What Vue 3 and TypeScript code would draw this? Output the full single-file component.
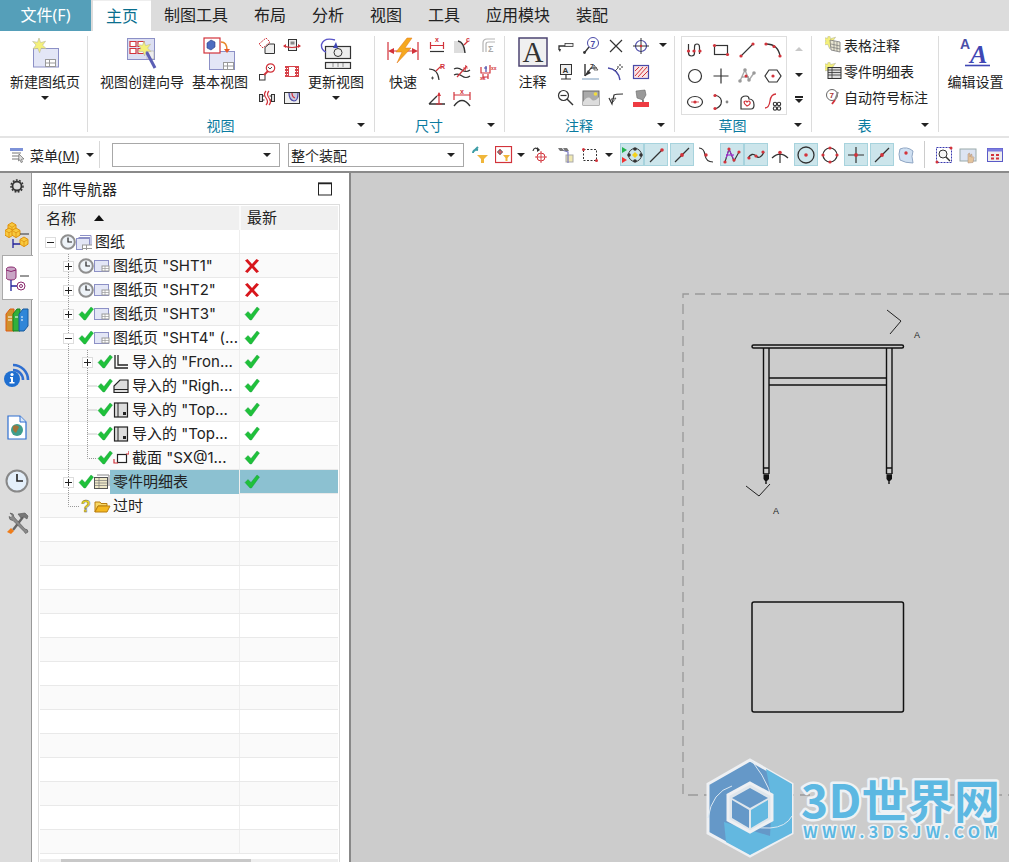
<script setup lang="ts">
import { h, type FunctionalComponent } from 'vue'

// 图标都按 1:1 像素坐标画，w/h 默认 18
interface IconDef { w?: number; h?: number; d: string }

const R = '#d2333b'
const K = '#333'
const B = '#4a4aa8'
const dot = (x: number, y: number, r = 1.6, c = R) => `<circle cx="${x}" cy="${y}" r="${r}" fill="${c}"/>`
const line = (d: string, c = K, w = 1.2) => `<path d="${d}" fill="none" stroke="${c}" stroke-width="${w}"/>`
const tiny = (x: number, y: number, s: string, c = R, fs = 7) =>
  `<text x="${x}" y="${y}" font-size="${fs}" font-weight="700" font-family="Liberation Sans, sans-serif" fill="${c}">${s}</text>`
const star = (x: number, y: number) =>
  `<path d="M${x} ${y - 7}l1.6 4.6 5-1.4-3 4 3.6 3.4-5-.4-1.6 4.6-1.8-4.4-4.8.6 3-4-3.4-3.6 4.9.9z" fill="#f4f07a" stroke="#b9b9a0" stroke-width=".6"/>`
const miniTable = (x: number, y: number) =>
  `<rect x="${x}" y="${y}" width="10" height="7" fill="#fff" stroke="#999"/><path d="M${x} ${y + 3.5}h10M${x + 4} ${y}v7" stroke="#999"/>`
const sheet = (x: number, y: number, w: number, h2: number) =>
  `<rect x="${x}" y="${y}" width="${w}" height="${h2}" fill="#e3e6f6" stroke="#8c90c6"/>`
const cube = (x: number, y: number, s: number) =>
  `<path d="M${x} ${y + s * .3}l${s * .5}-${s * .3} ${s * .5} ${s * .3}v${s * .6}l-${s * .5} ${s * .3}-${s * .5}-${s * .3}z" fill="#f7c93e" stroke="#e0920f"/><path d="M${x} ${y + s * .3}l${s * .5} ${s * .3} ${s * .5}-${s * .3}M${x + s * .5} ${y + s * .6}v${s * .6}" fill="none" stroke="#e0920f" stroke-width=".8"/>`
const check = '<path d="M1 8.500l3-3 3 3L13 1l2.500 2-8 11H6z" fill="#1fc13a" stroke="#12983a" stroke-width=".4"/>'
const cross = '<path d="M1 2.500L3.500 1 8 6l4.500-5L15 2.500 10 8l5 5.500-2.500 1.500L8 10l-4.500 5L1 13.500 6 8z" fill="#d8161c"/>'

const icons: Record<string, IconDef> = {
  // 大图标
  newSheet: { w: 30, h: 32, d: sheet(3.5, 11.5, 25, 18.5) + miniTable(15.5, 22.5) + star(9, 8) },
  wizard: {
    w: 32, h: 34,
    d: `<rect x="1.500" y="1.500" width="27" height="21" fill="#dcdff2" stroke="#8c90c6"/>` +
      `<path d="M4 4.500h6v5H4zM12 4.500h6v5h-6zM4 11.500h6v5H4zM12 11.500h6v5h-6z" fill="#fff" stroke="${R}" stroke-width="1.200"/>` +
      `<path d="M21 14h7v8h-7z" fill="#eee" stroke="#aaa" stroke-width=".6"/>` +
      `<path d="M19 12l10 19" stroke="#5b5fb5" stroke-width="3"/>` + star(18, 11),
  },
  baseView: {
    w: 34, h: 34,
    d: sheet(6.5, 14.5, 25, 18) + miniTable(20.5, 25.5) +
      `<rect x="1" y="1" width="16" height="15" fill="#fff" stroke="${R}" stroke-width="1.200"/>` +
      `<path d="M4 6l4-3 4 2v5l-4 3-4-2z" fill="#4d6cc0" stroke="#2c3a80" stroke-width=".6"/>` +
      `<path d="M18 5q6 0 6 8" fill="none" stroke="#e8882c" stroke-width="1.600"/><path d="M21 12h6l-3 4z" fill="#e8582c"/>`,
  },
  updateView: {
    w: 32, h: 32,
    d: `<rect x="5.500" y="9.500" width="25" height="12" fill="#eee" stroke="${K}" stroke-width="1.200"/>` +
      `<rect x="5.500" y="25.500" width="25" height="6" fill="#eee" stroke="${K}" stroke-width="1.200"/>` +
      `<path d="M13 26.500v4M18 26.500v4M23 26.500v4" stroke="${K}" stroke-dasharray="1 1"/>` +
      `<circle cx="18" cy="15.500" r="4" fill="none" stroke="${K}"/>` +
      `<path d="M15 3Q4 0 1.500 7.500 1 13 6 15" fill="none" stroke="#5a55c8" stroke-width="1.400"/><path d="M13 11l3-6 2 6z" fill="#3f47b4"/>`,
  },
  bolt: {
    w: 32, h: 28,
    d: `<path d="M1 5v18M31 5v18M3 14h26" stroke="${R}" stroke-width="1.200"/><path d="M1 14l6-3v6zM31 14l-6-3v6z" fill="${R}"/>` +
      `<path d="M20 1L9 15h6l-5 11 14-15h-6l7-10z" fill="#f5a81f" stroke="#e0741a" stroke-width=".5"/>`,
  },
  bigA: {
    w: 30, h: 30,
    d: `<rect x="1" y="1" width="28" height="28" fill="#f0f0f0" stroke="#4c4472" stroke-width="1.500"/>` +
      `<text x="15" y="25" text-anchor="middle" font-size="29" font-family="Liberation Serif, serif" fill="#333">A</text>`,
  },
  editSet: {
    w: 34, h: 32,
    d: `<text x="1" y="12" font-size="14" font-weight="700" font-family="Liberation Sans, sans-serif" fill="#4a4fa8">A</text>` +
      `<text x="11" y="26" font-size="26" font-weight="700" font-style="italic" font-family="Liberation Serif, serif" fill="#3f47b4">A</text>` +
      `<path d="M6 28.500h25" stroke="#3f47b4" stroke-width="1.600"/>`,
  },
  // 视图组小图标
  v1: { d: `<path d="M1 7l7-6 4 4-7 6z" fill="none" stroke="${R}" stroke-dasharray="2 1"/><path d="M7 16.500v-6l4-3.500h5.500v9.500z" fill="#eee" stroke="${K}"/>` },
  v2: { d: `<rect x="5.500" y="2.500" width="8" height="11" fill="#eee" stroke="${K}"/><rect x="7.500" y="4.500" width="4" height="3" fill="#888"/>` + line('M1 9q8 3 16 0', R) + `<path d="M0 9l3-2v4zM18 9l-3-2v4z" fill="${R}"/>` },
  v3: { d: `<circle cx="12.500" cy="5" r="4.200" fill="#fff" stroke="${R}" stroke-width="1.200"/><rect x="1.500" y="11.500" width="5.500" height="5.500" fill="#fff" stroke="${K}"/>` + line('M6 12l4-4', R, 1.800) + line('M10 4l2 2 2-2', K, .9) },
  v4: { d: `<rect x="2" y="3" width="14" height="11" fill="#d6434a"/><rect x="6" y="4" width="6" height="9" fill="#fff"/><path d="M2 5.500h14M2 8.500h14M2 11.500h14" stroke="#fff" stroke-dasharray="1 1"/>` },
  v5: { d: `<rect x="1.500" y="5.500" width="3" height="7" fill="#ddd" stroke="${K}"/><rect x="13.500" y="5.500" width="3" height="7" fill="#ddd" stroke="${K}"/><path d="M4.500 7h2M4.500 11h2M11.500 7h2M11.500 11h2" stroke="${K}"/>` + line('M8 2q-3 3 0 7t0 7M11 2q-3 3 0 7t0 7', R) },
  v6: { d: `<rect x="1.500" y="3.500" width="15" height="11" fill="#eee" stroke="${K}"/><path d="M6 4q0 7 5 8 4 0 4-8z" fill="#c9c9dd"/>` + line('M6 4q0 7 5 8 4 0 4-8', B) + line('M9 4q0 4 3 5', R) },
  // 尺寸组
  d1: { d: line('M2.500 5v7M15.500 5v7M2.500 8.500h13', R) + tiny(7, 5, 'x') + line('M2 14.500h14', K) },
  d2: { d: `<path d="M1 4h5q4 2 5 12H1z" fill="#ddd"/>` + line('M5 4q6 1 7 12', K, 1.400) + line('M11 8l4-4', R) + tiny(13, 5, 'c') },
  d3: { d: line('M4 15V6q0-4 4-4h8M7 15V7q0-2 3-2h6', '#b5b5b5', 1.200) + tiny(9, 15, 'Σ', '#aaa', 9) },
  d4: { d: line('M1 6q9 0 10 11', K) + line('M8 8l4-4h3', R) + tiny(12, 5.5, 'R') + `<path d="M3 15h3M4.500 13.500v3" stroke="${K}" stroke-width=".8"/>` },
  d5: { d: line('M1 6q4-2 8 1t8 0M1 12q4-2 8 1t8 0', K) + line('M4 14L14 3', R) + `<path d="M10 5h5M12.500 2v6" stroke="${R}" stroke-width=".7"/>` },
  d6: { d: line('M2 4v6h9V2M4 14h5M4 11v5M9 11v5', R) + line('M5 5h3M7 3v6', B) + tiny(12, 7, 'xx', R, 5) + tiny(1, 17, 'xx', R, 5) },
  d7: { d: line('M1 15L9 7M1 15h16', K, 1.300) + line('M11 4v11M8 15h6', R) + `<path d="M11 3l-2 4h4z" fill="${R}"/>` },
  d8: { d: line('M1 3v8M17 3v8M1 6h16', R) + tiny(7, 5, 'x') + line('M1 17q8-11 16 0', K, 1.300) },
  // 注释组
  n1: { d: line('M2 12V9h6', K, 1.300) + `<rect x="8" y="6.500" width="8" height="3" fill="#eee" stroke="${K}" stroke-width=".8"/>` + `<path d="M1 12l2 3 1-3z" fill="${K}"/>` },
  n2: { d: `<circle cx="11" cy="6" r="5.500" fill="#fff" stroke="${B}"/>` + tiny(8.5, 9.5, '7', B, 8.5) + line('M7 10l-4 5', K, 1.300) + dot(2.5, 15.5, 1.4, K) },
  n3: { d: line('M3 3l12 12M15 3L3 15', K, 1.200) },
  n4: { d: `<circle cx="9" cy="9" r="5.500" fill="none" stroke="${B}" stroke-width="1.200"/>` + line('M9 1v16M1 9h16', K, 1) + dot(9, 9, 1.2) },
  n5: { d: `<rect x="3.500" y="1.500" width="11" height="10" fill="#eee" stroke="${K}"/>` + tiny(5.5, 9.5, 'A', K, 8) + line('M9 11.500v4M4 16h10', K, 1.200) },
  n6: { d: line('M3 1v12', K, 1.400) + line('M3 13L9 5h6', K) + `<path d="M3 13l3-6 3 3z" fill="${K}"/>` + `<rect x="0" y="15" width="17" height="2" fill="#bcd"/>` + tiny(8, 6, '7', K, 7) + `<path d="M12 2l4 5h-4z" fill="none" stroke="${K}" stroke-width=".7"/>` },
  n7: { d: line('M1 5q10 1 12 12', B, 1.400) + line('M11 5l-3 3', K, .8) + `<path d="M13 1v2M13 5v2M10 4h2M14 4h2" stroke="${K}"/>` },
  n8: { d: `<rect x="1.500" y="2.500" width="15" height="13" fill="#fbe3e3" stroke="${B}" stroke-width="1.200"/><path d="M3 13l8-9M6 14l9-10M10 14l6-6M3 8l4-4" stroke="${R}"/>` },
  n9: { d: `<circle cx="6.500" cy="6.500" r="5" fill="none" stroke="${K}" stroke-width="1.200"/>` + line('M3.500 6.500h6', K) + line('M10 10l6 6', K, 1.400) },
  n10: { d: `<rect x="1" y="2" width="16" height="14" fill="#aaa" stroke="#666"/><path d="M1 13q5-7 8-3t8-2v8H1z" fill="#ddd"/>` + dot(13.5, 5, 1.8, '#f1dc3c') },
  n11: { d: line('M2 9l3 6 2-9q1-1 9-1', K, 1.200) + `<path d="M4 10l5-1-3 4z" fill="none" stroke="${K}" stroke-width=".7"/>` },
  n12: { w: 18, h: 20, d: `<rect x="1" y="14" width="16" height="5" fill="#ee3b42"/><path d="M4 3l9-1 1 5-3 5-6-2z" fill="#999" stroke="#666" stroke-width=".6"/>` + line('M11 12v2', K) },
  // 草图库
  s1: { d: line('M2.500 3v9q0 3 3 3t3-3V6q0-3 2.500-3t2.500 3v7', K, 1.200) + dot(2.5, 10) + dot(8, 10) + dot(14, 10) },
  s2: { d: `<rect x="2.500" y="4.500" width="13" height="9" fill="none" stroke="${K}" stroke-width="1.200"/>` + dot(2.5, 4.5) + dot(15.5, 13.5) },
  s3: { d: line('M3 15L15 3', K, 1.100) + dot(3, 15) + dot(15, 3) },
  s4: { d: line('M2 3q12 0 14 12', K, 1.300) + dot(2, 3) + dot(10, 5.5) + dot(16, 15) },
  s5: { d: `<circle cx="9" cy="9" r="6.500" fill="none" stroke="${K}" stroke-width="1.200"/>` },
  s6: { d: line('M9 1.500v15M1.500 9h15', K, 1.200) },
  s7: { d: line('M2 14L7 3l4 10 5-7', '#aaa', 1.400) + line('M4 10h7', '#888', 1) + dot(2, 14, 1.8, '#999') + dot(7, 3, 1.8, '#999') + dot(11, 13, 1.8, '#999') + dot(16, 6, 1.8, '#999') + dot(8, 9, 1.5) },
  s8: { d: `<path d="M5 3h8l4 6-4 6H5L1 9z" fill="none" stroke="${K}" stroke-width="1.200"/>` + dot(9, 9) },
  s9: { d: `<ellipse cx="9" cy="9" rx="7.500" ry="5.500" fill="none" stroke="${K}" stroke-width="1.200"/>` + line('M5 9h8', R, .8) + dot(9, 9) },
  s10: { d: line('M3 2q8 2 6 9-1 3-6 5', K, 1.200) + dot(3, 2.5) + dot(3, 15.5) + dot(15, 9, 1.4, '#888') },
  s11: { d: `<path d="M3 7q0-4 5-4 3 0 3 3 5 0 5 6 0 4-3 4H3z" fill="#fff" stroke="${K}" stroke-width="1.200"/><path d="M6 9q2-2 3 0 2-2 3 0t-3 4q-3-2-3-4z" fill="#fff" stroke="${R}" stroke-width="1.200"/>` },
  s12: { d: line('M1 15q4 0 5-7t6-7', R, 1.300) + `<g fill="none" stroke="${K}" stroke-width="1.100"><circle cx="11" cy="11" r="1.700"/><circle cx="15" cy="11" r="1.700"/><circle cx="11" cy="15.500" r="1.700"/><circle cx="15" cy="15.500" r="1.700"/></g>` },
  // 表
  t1: { d: star(4, 5) + `<path d="M5 4l10 2v10L6 14z" fill="#e9e6d2" stroke="#777" stroke-width=".8"/><path d="M6 8l9 2M6 11l9 2M9 5v10M12 6v9" stroke="#777" stroke-width=".7"/>` },
  t2: { d: star(4, 5) + `<rect x="3" y="5.500" width="13" height="11" fill="#dedede" stroke="${K}"/><path d="M3 8h13M3 10.500h13M3 13h13M7 5.500v11" stroke="${K}" stroke-width=".8"/>` },
  t3: { d: `<circle cx="7" cy="7" r="5.500" fill="#fff" stroke="#666"/>` + tiny(4.5, 10, '7', '#a33', 8) + line('M10 12l-3 4', R, 1.800) + line('M13 4l-3 8', '#888', 1.800) },
  // 工具条
  menu: { d: `<rect x="1" y="2" width="13" height="3" fill="#7d92d8"/><path d="M3 7h9M3 10h7M3 13h7" stroke="#777"/><path d="M10 8l5 5-2.500.2 1 2.800-1.500.5-1-2.800-1.500 1.300z" fill="#ddd" stroke="#555" stroke-width=".6"/>` },
  tbFilter: { d: `<path d="M6 9h11l-4 4v4h-3v-4z" fill="#f0b63a"/>` + line('M2 7q0-4 5-3M7 1L3 5', '#3d9da6', 2) },
  tbRedBox: { d: `<rect x=".500" y=".500" width="16" height="16" fill="none" stroke="${R}" stroke-width="1.200"/>` + line('M5 3v6M2 6h6', R) + `<circle cx="5" cy="6" r="2" fill="none" stroke="${K}" stroke-width=".7"/><path d="M8 9h7l-2.500 3v3h-2v-3z" fill="#f0b63a"/>` },
  tb3: { d: `<circle cx="10" cy="11" r="4" fill="none" stroke="${R}"/>` + line('M10 5v12M4 11h12', R, .9) + line('M8 4Q3 0 2 5', K, 1.200) + `<path d="M6 1l3 3-3 2z" fill="#333"/>` },
  tb4: { d: `<rect x="9" y="9" width="7" height="7" fill="#f0e8b0" stroke="#aaa"/>` + line('M2 3l9 3v11', '#7a7ac0', 1.200) + `<path d="M1 2h4l2 3H3zM6 2h4l2 3H8z" fill="#777"/>` },
  tb5: { d: `<rect x="2.500" y="3.500" width="13" height="11" fill="none" stroke="${K}" stroke-dasharray="2 1.500"/>` + dot(2.5, 3.5, 1.5) + dot(15.5, 14.5, 1.5) },
  snapAll: { w: 22, h: 20, d: `<path d="M1 2l5 3-5 3z" fill="#22b14c"/><path d="M1 12l5 3-5 3z" fill="#e33"/><circle cx="14" cy="10" r="6.500" fill="none" stroke="${K}"/>` + dot(14, 4, 1.8, K) + dot(14, 16, 1.8, K) + dot(8, 10, 1.8, K) + dot(20, 10, 1.8, K) + `<path d="M14 7l3 3-3 3-3-3z" fill="#f3d21c"/>` },
  ln1: { d: line('M3 16L15 4', K, 1.200) + dot(15, 4, 1.8) },
  ln2: { d: line('M2 16L16 2', K, 1.200) + dot(9, 9, 1.9) },
  ln3: { d: line('M2 2q5 0 6 7t8 7', K, 1.200) + dot(9, 9, 1.7) },
  ln4: { d: line('M2 16L6 3l5 12 5-9', K, 1.100) + line('M3 9h8', '#a02ccf', 1.200) + line('M3 12L6 3l5 11', '#a02ccf', 1) + dot(6, 3) + dot(11, 14) + dot(2, 16) + dot(16, 6) },
  ln5: { d: line('M1 12q4-6 8-2t8-4', K, 1.300) + dot(2, 12) + dot(9, 10) + dot(16, 6) },
  ln6: { d: line('M1 12q8-8 16 0M9 6v11', K, 1.200) + dot(9, 6.5, 1.8) },
  cir1: { w: 20, h: 20, d: `<circle cx="10" cy="10" r="8" fill="none" stroke="${K}" stroke-width="1.300"/>` + dot(10, 10, 1.8) },
  cir2: { d: `<circle cx="9" cy="9" r="7" fill="none" stroke="${K}" stroke-width="1.200"/>` + dot(9, 2) + dot(9, 16) + dot(2, 9) + dot(16, 9) },
  cross: { d: line('M9 1v16M1 9h16', K, 1.200) + dot(9, 9, 1.9) },
  face: { d: `<path d="M3 3q7-3 13 2-2 5 0 12-8 0-13-3-2-6 0-11z" fill="#cfe0f2" stroke="#8fa6c4"/>` + dot(9, 7, 1.7) },
  b1: { d: `<rect x="1.500" y="1.500" width="15" height="15" fill="none" stroke="#3a3ab0" stroke-dasharray="2 1"/><circle cx="8" cy="8" r="4" fill="#f6f6f6" stroke="${K}"/>` + line('M11 11l4 4', K, 1.500) + dot(16, 2, 1.5) + dot(2, 16, 1.5) },
  b2: { d: `<rect x="1" y="3" width="16" height="12" fill="#dde4f2" stroke="#9aa"/><path d="M9 17V8l1.500-1 .5 4 1-3 1 .5v3l1-1 1 1-1 5z" fill="#e4c49c" stroke="#a87" stroke-width=".5"/>` },
  b3: { d: `<rect x="1.500" y="2.500" width="15" height="13" fill="#eee" stroke="#5a5ac8"/><rect x="1.500" y="2.500" width="15" height="3" fill="#7d7de0"/><path d="M5 8h3v2H5zM10 8h3v2h-3zM5 11.500h3v2H5zM10 11.500h3v2h-3z" fill="${R}"/>` },
  // 导航栏
  gear: { d: `<circle cx="9" cy="9" r="4.500" fill="none" stroke="#333" stroke-width="1.800"/><circle cx="9" cy="9" r="6" fill="none" stroke="#333" stroke-width="1.500" stroke-dasharray="1.800 1.500"/>` },
  rTree: { w: 24, h: 26, d: cube(3, .5, 8) + cube(0, 6, 8) + cube(7, 6, 8) + cube(15, 15, 8) + `<path d="M15 12h9" stroke="${K}"/><path d="M8 17v9M8 22h7" stroke="#22229a" stroke-width="1.300" fill="none"/>` },
  rPart: { w: 24, h: 26, d: `<path d="M0 5q0-3 5-3t5 3v7q0 3-5 3t-5-3z" fill="#c9a5c5" stroke="#8b2a6f"/><path d="M0 5q5 3 10 0" fill="none" stroke="#8b2a6f"/><path d="M14 11h9" stroke="${K}"/><path d="M5 15v11M5 21h6" stroke="#22229a" stroke-width="1.300" fill="none"/><circle cx="15" cy="21" r="4" fill="none" stroke="#8b2a6f"/><circle cx="15" cy="21" r="1.500" fill="none" stroke="#8b2a6f"/>` },
  rBooks: { w: 24, h: 24, d: `<path d="M1 6l4-5h4v22H1z" fill="#d0902c" stroke="#e05a10"/><path d="M8 6l4-5h3v22H8z" fill="#30b03c" stroke="#18801f"/><path d="M14 6l4-5h5v17l-4 5h-5z" fill="#2f86d8" stroke="#185a9c"/><path d="M3 9h4M3 12h4M10 9h3M16 9h2M16 12h2" stroke="#fff"/>` },
  rInfo: { w: 26, h: 26, d: `<path d="M9 3a15 15 0 0 1 15 15M9 8a10 10 0 0 1 10 10" fill="none" stroke="#2f6fd0" stroke-width="2.600"/><circle cx="8" cy="17" r="8" fill="#1f6fd0"/><circle cx="8" cy="12.500" r="1.600" fill="#fff"/><path d="M6 15h3v5h1.500v1.500h-5V20H7v-3.500H6z" fill="#fff"/>` },
  rFile: { w: 20, h: 26, d: `<path d="M1 1h12l6 6v17H1z" fill="#fff" stroke="#2f6fd0" stroke-width="1.200"/><path d="M13 1v6h6" fill="#d8e6f8" stroke="#2f6fd0"/><circle cx="10" cy="15" r="6" fill="#3f9e8c"/><path d="M6 11q4-2 6 1l-3 6q-4-2-3-7z" fill="#a3743a"/>` },
  rClock: { w: 24, h: 24, d: `<circle cx="12" cy="12" r="10.500" fill="#e4effa" stroke="#888" stroke-width="2"/><path d="M12 5v7h6" fill="none" stroke="#222" stroke-width="1.600"/>` },
  rTools: { w: 24, h: 24, d: `<path d="M8 19L18 6" stroke="#666" stroke-width="2.400"/><path d="M13 3l7-1 3 3-1 3-3-2-3 1z" fill="#777" stroke="#555" stroke-width=".6"/><path d="M5 2q4 0 4 4l11 12q3 0 3 3l-2.500 1.500-1.500-2-11-11q-4 0-4-4l2 1 1.500-1.500z" fill="#8a8a8a" stroke="#555" stroke-width=".6"/><path d="M2 21l4-4 3 3-3 3z" fill="#ef7d1a"/>` },
  max: { w: 14, h: 14, d: `<rect x=".500" y="1" width="13" height="12" fill="#fff" stroke="#222"/><path d="M0 1.500h14" stroke="#222" stroke-width="1.500"/>` },
  // 树节点
  plus: { w: 11, h: 11, d: `<rect x=".500" y=".500" width="10" height="10" fill="#fff" stroke="#ddd"/><path d="M2 5.500h7M5.500 2v7" stroke="#222"/>` },
  minus: { w: 11, h: 11, d: `<rect x=".500" y=".500" width="10" height="10" fill="#fff" stroke="#ddd"/><path d="M2 5.500h7" stroke="#222"/>` },
  clock: { w: 16, h: 16, d: `<circle cx="8" cy="8" r="6.800" fill="#eef3f8" stroke="#8f8f8f" stroke-width="2"/><path d="M8 3.500V8h4" fill="none" stroke="#222" stroke-width="1.200"/>` },
  check: { w: 16, h: 16, d: check },
  cross2: { w: 16, h: 16, d: cross },
  quest: { w: 16, h: 16, d: `<text x="8" y="14" text-anchor="middle" font-size="16" font-weight="700" font-family="Liberation Sans, sans-serif" fill="#e8d31c" stroke="#555" stroke-width=".4">?</text>` },
  drawing: { w: 16, h: 16, d: `<path d="M4 1.500h11v10" fill="none" stroke="#8c90c6"/><path d="M2.500 3.500H14" fill="none" stroke="#8c90c6"/><rect x=".500" y="4.500" width="13" height="11" fill="#e3e6f6" stroke="#8c90c6"/>` + miniTable(6.5, 11) },
  page: { w: 16, h: 14, d: `<rect x=".500" y="1.500" width="14" height="11" fill="#e3e6f6" stroke="#8c90c6"/><rect x="8" y="7" width="7" height="5" fill="#fff" stroke="#999"/><path d="M8 9.500h7M11 7v5" stroke="#999" stroke-width=".7"/>` },
  vFront: { w: 16, h: 16, d: `<path d="M2 1v13h13M5 1v10h10" fill="none" stroke="#222" stroke-width="1.300"/>` },
  vRight: { w: 16, h: 16, d: `<path d="M1 14.500V8l6-6h8v12.500z" fill="#ddd" stroke="#222" stroke-width="1.200"/><path d="M1 11.500h14" stroke="#222"/>` },
  vTop: { w: 16, h: 16, d: `<rect x="1.500" y="1" width="13" height="14" fill="#ddd" stroke="#222" stroke-width="1.200"/><path d="M5 1v14" stroke="#222"/><rect x="10" y="10" width="3" height="3" fill="#222"/>` },
  vSect: { w: 16, h: 16, d: `<rect x="4.500" y="4.500" width="9" height="8" fill="#fff" stroke="#222" stroke-width="1.200"/><path d="M1 9v4h4M13 4h3V1" fill="none" stroke="${R}" stroke-width="1.200"/>` },
  parts: { w: 16, h: 16, d: `<path d="M3 1h12v11" fill="none" stroke="#888"/><rect x=".500" y="3.500" width="13" height="11" fill="#eee8c8" stroke="#555"/><path d="M1 6.500h12M1 9h12M1 11.500h12M5 4v10" stroke="#777" stroke-width=".7"/>` },
  folder: { w: 17, h: 14, d: `<path d="M1 3h5l1 1.500h6V7H4L1 13z" fill="#f7d765" stroke="#b97e10"/><path d="M4 7h12l-3 6H1z" fill="#f4b81f" stroke="#b97e10"/>` },
}

const Ico: FunctionalComponent<{ name: string }> = (p) => {
  const i = icons[p.name]
  const w = i.w ?? 18
  const ht = i.h ?? 18
  return h('svg', { width: w, height: ht, viewBox: `0 0 ${w} ${ht}`, innerHTML: i.d, class: 'ico' })
}
Ico.props = ['name']

const tabs = ['制图工具', '布局', '分析', '视图', '工具', '应用模块', '装配']
const viewTools = ['v1', 'v2', 'v3', 'v4', 'v5', 'v6']
const dimTools = ['d1', 'd2', 'd3', 'd4', 'd5', 'd6', 'd7', 'd8']
const noteTools = ['n1', 'n2', 'n3', 'n4', 'n5', 'n6', 'n7', 'n8', 'n9', 'n10', 'n11', 'n12']
const sketchTools = ['s1', 's2', 's3', 's4', 's5', 's6', 's7', 's8', 's9', 's10', 's11', 's12']
const tableTools = [
  { icon: 't1', label: '表格注释' },
  { icon: 't2', label: '零件明细表' },
  { icon: 't3', label: '自动符号标注' },
]

interface BarItem { n?: string; on?: boolean; ml?: number; caret?: number; sep?: boolean }
const barItems: BarItem[] = [
  { n: 'tbFilter', ml: 4 }, { n: 'tbRedBox' }, { caret: 10 },
  { n: 'tb3', ml: 2 }, { n: 'tb4', ml: 2 }, { n: 'tb5' }, { caret: 14 },
  { n: 'snapAll', on: true, ml: 4 }, { n: 'ln1', on: true },
  { n: 'ln2', on: true, ml: 2 }, { n: 'ln3' },
  { n: 'ln4', on: true, ml: 2 }, { n: 'ln5', on: true }, { n: 'ln6' },
  { n: 'cir1', on: true, ml: 2 }, { n: 'cir2' },
  { n: 'cross', on: true, ml: 2 }, { n: 'ln2', on: true, ml: 2 }, { n: 'face' },
  { sep: true, ml: 6 },
  { n: 'b1', ml: 7 }, { n: 'b2' }, { n: 'b3', ml: 3 },
]

const railItems = [
  { n: 'gear', h: 26, mt: 0 },
  { n: 'rTree', h: 40, mt: 16 },
  { n: 'rPart', h: 45, mt: 0, active: true },
  { n: 'rBooks', h: 40, mt: 0 },
  { n: 'rInfo', h: 40, mt: 15 },
  { n: 'rFile', h: 40, mt: 13 },
  { n: 'rClock', h: 40, mt: 13 },
  { n: 'rTools', h: 40, mt: 2 },
]

interface TreeRow { level: number; exp?: 'plus' | 'minus'; st: string; icon: string; label: string; latest?: string; sel?: boolean }
const indent = [5, 23, 42]
const treeRows: TreeRow[] = [
  { level: 0, exp: 'minus', st: 'clock', icon: 'drawing', label: '图纸' },
  { level: 1, exp: 'plus', st: 'clock', icon: 'page', label: '图纸页 "SHT1"', latest: 'cross2' },
  { level: 1, exp: 'plus', st: 'clock', icon: 'page', label: '图纸页 "SHT2"', latest: 'cross2' },
  { level: 1, exp: 'plus', st: 'check', icon: 'page', label: '图纸页 "SHT3"', latest: 'check' },
  { level: 1, exp: 'minus', st: 'check', icon: 'page', label: '图纸页 "SHT4" (...', latest: 'check' },
  { level: 2, exp: 'plus', st: 'check', icon: 'vFront', label: '导入的 "Fron...', latest: 'check' },
  { level: 2, st: 'check', icon: 'vRight', label: '导入的 "Righ...', latest: 'check' },
  { level: 2, st: 'check', icon: 'vTop', label: '导入的 "Top...', latest: 'check' },
  { level: 2, st: 'check', icon: 'vTop', label: '导入的 "Top...', latest: 'check' },
  { level: 2, st: 'check', icon: 'vSect', label: '截面 "SX@1...', latest: 'check' },
  { level: 1, exp: 'plus', st: 'check', icon: 'parts', label: '零件明细表', latest: 'check', sel: true },
  { level: 1, st: 'quest', icon: 'folder', label: '过时' },
]
const emptyRows = 14
</script>

<template>
  <div class="app">
    <nav class="tabs">
      <div class="file-tab">文件(F)</div>
      <div class="tab active">主页</div>
      <div v-for="t in tabs" :key="t" class="tab">{{ t }}</div>
    </nav>

    <section class="ribbon">
      <div class="grp g1">
        <div class="grp-body">
          <div class="big w-full">
            <div class="big-ico"><Ico name="newSheet" /></div>
            <span>新建图纸页</span>
            <i class="caret big-caret"></i>
          </div>
        </div>
      </div>

      <div class="grp g2">
        <div class="grp-body">
          <div class="big w84">
            <div class="big-ico"><Ico name="wizard" /></div>
            <span>视图创建向导</span>
          </div>
          <div class="big w56 ml8">
            <div class="big-ico"><Ico name="baseView" /></div>
            <span>基本视图</span>
          </div>
          <div class="mini-grid cols2 ml6">
            <div v-for="n in viewTools" :key="n" class="cell"><Ico :name="n" /></div>
          </div>
          <div class="big w56 ml4">
            <div class="big-ico"><Ico name="updateView" /></div>
            <span>更新视图</span>
            <i class="caret big-caret"></i>
          </div>
        </div>
        <div class="grp-foot"><span>视图</span><b><i class="caret"></i></b></div>
      </div>

      <div class="grp g3">
        <div class="grp-body">
          <div class="big w48">
            <div class="big-ico"><Ico name="bolt" /></div>
            <span>快速</span>
          </div>
          <div class="mini-grid cols3">
            <div v-for="n in dimTools" :key="n" class="cell"><Ico :name="n" /></div>
          </div>
        </div>
        <div class="grp-foot"><span>尺寸</span><b><i class="caret"></i></b></div>
      </div>

      <div class="grp g4">
        <div class="grp-body">
          <div class="big w43">
            <div class="big-ico"><Ico name="bigA" /></div>
            <span>注释</span>
          </div>
          <div class="mini-grid cols4">
            <div v-for="n in noteTools" :key="n" class="cell"><Ico :name="n" /></div>
          </div>
          <i class="caret note-caret"></i>
        </div>
        <div class="grp-foot"><span>注释</span><b><i class="caret"></i></b></div>
      </div>

      <div class="grp g5">
        <div class="grp-body">
          <div class="gallery">
            <div v-for="n in sketchTools" :key="n" class="cell"><Ico :name="n" /></div>
          </div>
          <div class="spin">
            <i class="caret up"></i>
            <i class="caret"></i>
            <i class="caret more"></i>
          </div>
        </div>
        <div class="grp-foot"><span>草图</span><b><i class="caret"></i></b></div>
      </div>

      <div class="grp g6">
        <div class="grp-body table-tools">
          <div v-for="t in tableTools" :key="t.icon" class="tool-row">
            <Ico :name="t.icon" />
            <span>{{ t.label }}</span>
          </div>
        </div>
        <div class="grp-foot"><span>表</span><b><i class="caret"></i></b></div>
      </div>

      <div class="grp g7">
        <div class="grp-body">
          <div class="big w-full">
            <div class="big-ico"><Ico name="editSet" /></div>
            <span>编辑设置</span>
          </div>
        </div>
      </div>
    </section>

    <section class="toolbar">
      <Ico name="menu" />
      <span class="menu-label">菜单(<u>M</u>)</span>
      <i class="caret menu-caret"></i>
      <div class="bar-sep"></div>
      <div class="select s-a"><span></span><i class="caret"></i></div>
      <div class="select s-b"><span>整个装配</span><i class="caret"></i></div>
      <template v-for="(b, i) in barItems" :key="i">
        <div v-if="b.sep" class="bar-sep thin" :style="{ marginLeft: b.ml + 'px' }"></div>
        <div v-else-if="b.caret" class="bar-caret" :style="{ width: b.caret + 'px' }"><i class="caret"></i></div>
        <div v-else class="bar-btn" :class="{ on: b.on }" :style="{ marginLeft: (b.ml ?? 0) + 'px' }">
          <Ico :name="b.n!" />
        </div>
      </template>
    </section>

    <main class="main">
      <aside class="rail">
        <div
          v-for="r in railItems"
          :key="r.n"
          class="rail-item"
          :class="{ active: r.active }"
          :style="{ height: r.h + 'px', marginTop: r.mt + 'px' }"
        >
          <Ico :name="r.n" />
        </div>
      </aside>

      <section class="panel">
        <header class="panel-head">
          <span>部件导航器</span>
          <Ico name="max" />
        </header>
        <div class="grid">
          <div class="grid-head">
            <div class="col-name">名称<i class="sort"></i></div>
            <div class="col-new">最新</div>
          </div>
          <div class="grid-rows">
            <div v-for="(r, i) in treeRows" :key="i" class="row" :class="{ alt: i % 2 === 1, sel: r.sel }">
              <div class="cell-name" :style="{ paddingLeft: indent[r.level] + 'px' }">
                <span class="exp"><Ico v-if="r.exp" :name="r.exp" /></span>
                <span class="st"><Ico :name="r.st" /></span>
                <span class="node"><Ico :name="r.icon" /></span>
                <span class="label">{{ r.label }}</span>
              </div>
              <div class="cell-new"><Ico v-if="r.latest" :name="r.latest" /></div>
            </div>
            <div v-for="n in emptyRows" :key="'e' + n" class="row" :class="{ alt: (n + 11) % 2 === 1 }">
              <div class="cell-name"></div>
              <div class="cell-new"></div>
            </div>
            <svg class="guides" width="100" height="290" viewBox="0 0 100 290">
              <path
                d="M28.500 24V276.500H40M28.500 36H34M28.500 60H34M28.500 84H34M28.500 108H34M28.500 252H34M47.500 120V228.500H57M47.500 132H53M47.500 156H57M47.500 180H57M47.500 204H57"
                fill="none" stroke="#999" stroke-dasharray="1 1"
              />
            </svg>
          </div>
          <div class="hscroll"><div class="thumb"></div></div>
        </div>
      </section>

      <section class="canvas">
        <svg class="sheet" width="658" height="689" viewBox="351 173 658 689">
          <path d="M1009 294H683V795H1009" fill="none" stroke="#999" stroke-width="1.300" stroke-dasharray="10 6" />
          <g fill="none" stroke="#111" stroke-width="1.400">
            <rect x="752" y="345" width="151.500" height="3" rx="1.500" stroke-width="1.500" />
            <path d="M763.500 348V474M769 348V474M886.500 348V474M892 348V474" />
            <path d="M769 378H886.500M769 385H886.500" />
            <path d="M763.500 468H769M763.500 474H769M886.500 468H892M886.500 474H892" />
            <path d="M766 480V484M889 480V484" />
          </g>
          <path d="M763.500 475H769V479L767 481H765L763.500 479ZM886.500 475H892V479L890 481H888L886.500 479Z" fill="#111" />
          <path d="M887 310L901 321L890 334M746 486L759 496L770 484" fill="none" stroke="#222" />
          <text x="914" y="338" class="sect">A</text>
          <text x="773" y="514" class="sect">A</text>
          <rect x="752" y="602" width="151.500" height="110" rx="2" fill="none" stroke="#111" stroke-width="1.500" />

          <!-- 水印 -->
          <g>
            <path d="M750 760L792 784V833L750 856L708 833V784Z" fill="#6598c8" stroke="#eef0f3" stroke-width="3" />
            <path d="M766 769L792 784V833L750 855L726 842L724 822L770 836L772 800Z" fill="#63b8e0" />
            <path d="M752 761Q775 790 772 812M792 816Q780 838 728 820M708 818Q712 792 732 786" fill="none" stroke="#dbe8f2" />
            <path d="M750 783L772 795V820L750 832L728 820V795Z" fill="#dfe6ec" stroke="#eef0f3" stroke-width="3" />
            <path d="M750 788L768 798L750 808L732 798Z" fill="#6598c8" />
            <path d="M732 800L749 810V828L732 818Z" fill="#6598c8" />
            <path d="M768 800L751 810V828L768 818Z" fill="#63b8e0" />
            <text x="801" y="818" textLength="199" class="wm-big">3D世界网</text>
            <text x="803" y="838" textLength="195" class="wm-small">WWW.3DSJW.COM</text>
          </g>
        </svg>
      </section>
    </main>
  </div>
</template>

<style>
html,
body {
  margin: 0;
  overflow: hidden;
}
</style>

<style scoped>
.app {
  width: 1009px;
  height: 862px;
  display: flex;
  flex-direction: column;
  overflow: hidden;
  background: #fff;
  color: #222;
  font-family: "Noto Sans", "Noto Sans CJK SC", sans-serif;
}

.ico {
  display: block;
  flex: none;
}

.caret {
  display: block;
  width: 0;
  height: 0;
  border-left: 4px solid transparent;
  border-right: 4px solid transparent;
  border-top: 4px solid #222;
}

/* 顶部选项卡 */
.tabs {
  height: 31px;
  flex: none;
  display: flex;
  background: #dcdcdc;
  font-size: 16px;
  line-height: 31px;
}

.file-tab {
  width: 91px;
  margin-right: 2px;
  text-align: center;
  background: #559fb9;
  color: #fff;
}

.tab {
  padding: 0 13px;
}

.tab.active {
  background: #fff;
  color: #0a6f8e;
  border-top: 1px solid #eee;
  line-height: 30px;
}

/* 功能区 */
.ribbon {
  height: 105px;
  flex: none;
  display: flex;
  border-bottom: 2px solid #e4e4e4;
  box-sizing: content-box;
  font-size: 14px;
}

.grp {
  height: 96px;
  margin-top: 5px;
  box-sizing: border-box;
  display: flex;
  flex-direction: column;
  border-right: 1px solid #dcdcdc;
}

.g1 { width: 88px; }
.g2 { width: 287px; }
.g3 { width: 130px; }
.g4 { width: 170px; }
.g5 { width: 137px; }
.g6 { width: 127px; }
.g7 { width: 70px; border-right: 0; }

.g1 .grp-body,
.g7 .grp-body { padding-left: 3px; }
.g2 .grp-body { padding-left: 12px; }
.g3 .grp-body { padding-left: 4px; }
.g4 .grp-body { padding-left: 5px; }
.g4 .big { padding-left: 2px; box-sizing: border-box; }

.grp-body {
  flex: 1;
  min-height: 0;
  display: flex;
  box-sizing: border-box;
}

.grp-foot {
  height: 16px;
  flex: none;
  display: flex;
  line-height: 20px;
}

.grp-foot span {
  flex: 1;
  text-align: center;
  color: #0a7ba0;
}

.grp-foot b {
  width: 21px;
  padding: 7px 0 0 4px;
  box-sizing: border-box;
}

.big {
  display: flex;
  flex-direction: column;
  align-items: center;
  white-space: nowrap;
  line-height: 20px;
  color: #222;
}

.big-ico {
  height: 36px;
  padding-top: 1px;
  box-sizing: border-box;
}

.big-caret {
  margin-top: 4px;
}

.w-full { width: 100%; }
.w84 { width: 84px; }
.w56 { width: 56px; }
.w48 { width: 48px; }
.w43 { width: 43px; }
.ml4 { margin-left: 4px; }
.ml6 { margin-left: 6px; }
.ml8 { margin-left: 8px; }

.mini-grid {
  display: grid;
  grid-auto-rows: 26px;
  margin-top: -3px;
}

.cols2 { grid-template-columns: repeat(2, 25px); }
.cols3 { grid-template-columns: repeat(3, 25.5px); margin-left: -3px; }
.cols4 { grid-template-columns: repeat(4, 25px); }

.cell {
  display: flex;
  align-items: center;
  justify-content: center;
}

.note-caret {
  margin: 7px 0 0 6px;
}

.gallery {
  width: 106px;
  height: 79px;
  margin-left: 6px;
  box-sizing: border-box;
  border: 1.5px solid #dedede;
  display: grid;
  grid-template-columns: repeat(4, 26px);
  grid-auto-rows: 26px;
  align-content: start;
}

.spin {
  width: 20px;
  margin-left: 2px;
  display: flex;
  flex-direction: column;
  align-items: center;
  padding-top: 11px;
  gap: 22px;
}

.spin .up {
  border-top: 0;
  border-bottom: 4px solid #c8c8c8;
}

.spin .more {
  position: relative;
}

.spin .more::before {
  content: "";
  position: absolute;
  left: -4px;
  top: -7px;
  width: 8px;
  height: 1.5px;
  background: #222;
}

.table-tools {
  flex-direction: column;
  padding-left: 13px;
  margin-top: -4px;
}

.tool-row {
  height: 26px;
  flex: none;
  display: flex;
  align-items: center;
  gap: 1px;
  white-space: nowrap;
}

/* 工具条 */
.toolbar {
  height: 35px;
  flex: none;
  display: flex;
  align-items: center;
  box-sizing: border-box;
  padding-left: 9px;
  border-bottom: 2px solid #8a8a8a;
  font-size: 14px;
}

.menu-label {
  margin-left: 3px;
  white-space: nowrap;
  width: 52px;
}

.menu-caret {
  margin-left: 4px;
}

.bar-sep {
  width: 1px;
  height: 27px;
  margin-left: 5px;
  background: #d8d8d8;
}

.select {
  height: 24px;
  display: flex;
  align-items: center;
  justify-content: space-between;
  box-sizing: border-box;
  border: 1px solid #a8a8a8;
  padding: 0 8px 0 2px;
  background: #fff;
}

.s-a {
  width: 168px;
  margin-left: 12px;
}

.s-b {
  width: 176px;
  margin-left: 8px;
}

.bar-btn {
  width: 24px;
  height: 23px;
  flex: none;
  box-sizing: border-box;
  display: flex;
  align-items: center;
  justify-content: center;
}

.bar-btn.on {
  background: #cce5eb;
  border: 1px solid #a7d3dd;
}

.bar-caret {
  height: 10px;
  flex: none;
  display: flex;
  justify-content: center;
  align-items: center;
}

.thin {
  background: #ccc;
}

/* 主区域 */
.main {
  flex: 1;
  min-height: 0;
  display: flex;
}

.rail {
  width: 32px;
  flex: none;
  box-sizing: border-box;
  background: #dcdcdc;
  border-right: 1px solid #999;
}

.rail-item {
  width: 30px;
  margin-left: 2px;
  box-sizing: border-box;
  display: flex;
  align-items: center;
  justify-content: center;
}

.rail-item.active {
  width: 31px;
  background: #fff;
  border: 1px solid #aaa;
  border-right: 0;
}

.panel {
  width: 319px;
  flex: none;
  box-sizing: border-box;
  display: flex;
  flex-direction: column;
  border-right: 2px solid #888;
  padding: 0 9px 0 6px;
}

.panel-head {
  height: 31px;
  flex: none;
  display: flex;
  align-items: center;
  justify-content: space-between;
  padding: 0 8px 0 4px;
  font-size: 15px;
}

.grid {
  flex: 1;
  min-height: 0;
  display: flex;
  flex-direction: column;
  border: solid #ddd;
  border-width: 1px 1px 0;
  padding: 1px 1px 0;
  font-size: 15px;
}

.grid-head {
  height: 24px;
  flex: none;
  display: flex;
  background: #f0f0f0;
}

.col-name {
  width: 199px;
  flex: none;
  padding: 0 0 1px 6px;
  box-sizing: border-box;
  display: flex;
  align-items: center;
}

.sort {
  margin-left: 18px;
  border-left: 5.5px solid transparent;
  border-right: 5.5px solid transparent;
  border-bottom: 6px solid #111;
}

.col-new {
  flex: 1;
  padding-left: 6px;
  line-height: 22px;
  border-left: 2px solid #fafafa;
}

.grid-rows {
  position: relative;
  flex: 1;
  min-height: 0;
  overflow: hidden;
}

.row {
  height: 24px;
  box-sizing: border-box;
  display: flex;
  border-bottom: 1px solid #e9e9e9;
  background: #fff;
}

.row.alt {
  background: #fafafa;
}

.cell-name {
  width: 199px;
  flex: none;
  box-sizing: border-box;
  display: flex;
  align-items: center;
  height: 24px;
}

.cell-new {
  flex: 1;
  padding-left: 4px;
  display: flex;
  align-items: center;
  border-left: 1px solid #eee;
}

.exp {
  width: 11px;
  flex: none;
  position: relative;
  z-index: 1;
}

.st {
  width: 16px;
  margin-left: 4px;
  flex: none;
}

.node {
  width: 16px;
  flex: none;
}

.label {
  flex: 1;
  min-width: 0;
  height: 24px;
  padding-left: 3px;
  line-height: 24px;
  white-space: nowrap;
  overflow: hidden;
  font-family: Inter, "Noto Sans CJK SC", sans-serif;
}

.row.sel .label,
.row.sel .cell-new {
  background: #8cc1d1;
}

.guides {
  position: absolute;
  left: 0;
  top: 0;
  pointer-events: none;
}

.hscroll {
  height: 3px;
  flex: none;
  margin-top: 1px;
  background: #eee;
  padding-left: 21px;
}

.thumb {
  width: 190px;
  height: 3px;
  background: #c8c8c8;
}

.canvas {
  flex: 1;
  min-width: 0;
  background: #ccc;
  overflow: hidden;
}

.sheet {
  display: block;
}

.sect {
  font: 9px "Liberation Sans", sans-serif;
  fill: #222;
}

.wm-big,
.wm-small {
  font-family: "Noto Sans CJK SC", sans-serif;
  font-weight: 700;
  fill: #5cb8e2;
  stroke: #eef2f5;
  paint-order: stroke;
  stroke-linejoin: round;
}

.wm-big {
  font-size: 46px;
  stroke-width: 5px;
}

.wm-small {
  font-size: 16px;
  stroke-width: 3px;
}
</style>
